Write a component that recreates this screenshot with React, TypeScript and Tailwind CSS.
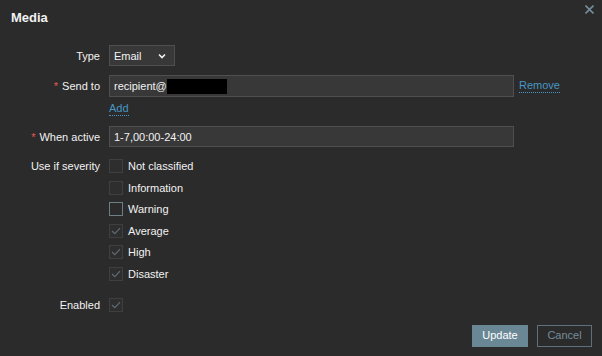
import React from "react";

const CheckMark = () => (
  <svg width="10" height="8" viewBox="0 0 10 8" fill="none">
    <path d="M1 4 L3.8 6.6 L9 1.2" stroke="#5f6c74" strokeWidth="1.2" />
  </svg>
);

function Box({ checked, hover }: { checked?: boolean; hover?: boolean }) {
  return (
    <span
      className={
        "flex h-[14px] w-[14px] shrink-0 items-center justify-center border " +
        (hover ? "border-[#6f7f88] bg-[#2b2b2b]" : "border-[#3f3f3f] bg-[#2e2e2e]")
      }
    >
      {checked && <CheckMark />}
    </span>
  );
}

function Row({
  label,
  required,
  className,
  align = "items-center",
  children,
}: {
  label: string;
  required?: boolean;
  className?: string;
  align?: string;
  children: React.ReactNode;
}) {
  return (
    <div className={"flex " + align + " " + (className ?? "")}>
      <div className="w-[100px] shrink-0 text-right leading-[14px] text-[#f2f2f2]">
        {required && <span className="mr-[4px] text-[#e45959]">*</span>}
        {label}
      </div>
      <div className="ml-[9px] flex items-center">{children}</div>
    </div>
  );
}

const severities = [
  { name: "Not classified", checked: false },
  { name: "Information", checked: false },
  { name: "Warning", checked: false, hover: true },
  { name: "Average", checked: true },
  { name: "High", checked: true },
  { name: "Disaster", checked: true },
];

export default function App() {
  return (
    <div
      className="relative h-[356px] w-[602px] overflow-hidden bg-[#2b2b2b] text-[11px] text-[#f2f2f2]"
      style={{ fontFamily: '"Liberation Sans", Arial, sans-serif' }}
    >
      <div className="px-[11px] pt-[9px] text-[13px] font-bold leading-[17px] text-[#f2f2f2]">Media</div>
      <button className="absolute right-[8px] top-[5px] text-[#768d99]">
        <svg width="9" height="9" viewBox="0 0 9 9">
          <path d="M0.5 0.5 L8.5 8.5 M8.5 0.5 L0.5 8.5" stroke="#768d99" strokeWidth="1.6" />
        </svg>
      </button>

      <div className="mt-[19px] flex flex-col">
        <Row label="Type">
          <div className="flex h-[21px] w-[66px] items-center justify-between border border-[#4f4f4f] bg-[#383838] pl-[4px] pr-[8px]">
            <span className="leading-[14px]">Email</span>
            <svg width="8" height="6" viewBox="0 0 8 6">
              <path d="M1 1.5 L4 4.5 L7 1.5" stroke="#f2f2f2" strokeWidth="1.6" fill="none" />
            </svg>
          </div>
        </Row>

        <Row label="Send to" required className="mt-[9px]">
          <div className="flex h-[22px] w-[405px] items-center border border-[#4f4f4f] bg-[#383838] px-[4px]">
            <span className="leading-[14px]">recipient@</span>
            <span className="h-[15px] w-[60px] bg-black" />
          </div>
          <a className="ml-[5px] border-b border-dotted border-[#4796c4] leading-[13px] text-[#4796c4]">Remove</a>
        </Row>

        <div className="ml-[109px] mt-[5px] flex">
          <a className="border-b border-dotted border-[#4796c4] leading-[13px] text-[#4796c4]">Add</a>
        </div>

        <Row label="When active" required className="mt-[10px]">
          <div className="flex h-[21px] w-[405px] items-center border border-[#4f4f4f] bg-[#383838] px-[4px]">
            <span className="leading-[14px]">1-7,00:00-24:00</span>
          </div>
        </Row>

        <Row label="Use if severity" align="items-start" className="mt-[12px]">
          <div className="flex flex-col gap-[7.5px]">
            {severities.map((s) => (
              <div key={s.name} className="flex h-[14px] items-center">
                <Box checked={s.checked} hover={s.hover} />
                <span className="ml-[5px] leading-[14px]">{s.name}</span>
              </div>
            ))}
          </div>
        </Row>

        <Row label="Enabled" className="mt-[17px]">
          <Box checked />
        </Row>

        <div className="mr-[10px] mt-[13px] flex justify-end gap-[9px]">
          <button className="h-[22px] w-[56px] bg-[#6a8795] text-[11px] text-white">Update</button>
          <button className="h-[22px] w-[55px] border border-[#5e707b] text-[11px] text-[#768d99]">Cancel</button>
        </div>
      </div>
    </div>
  );
}
